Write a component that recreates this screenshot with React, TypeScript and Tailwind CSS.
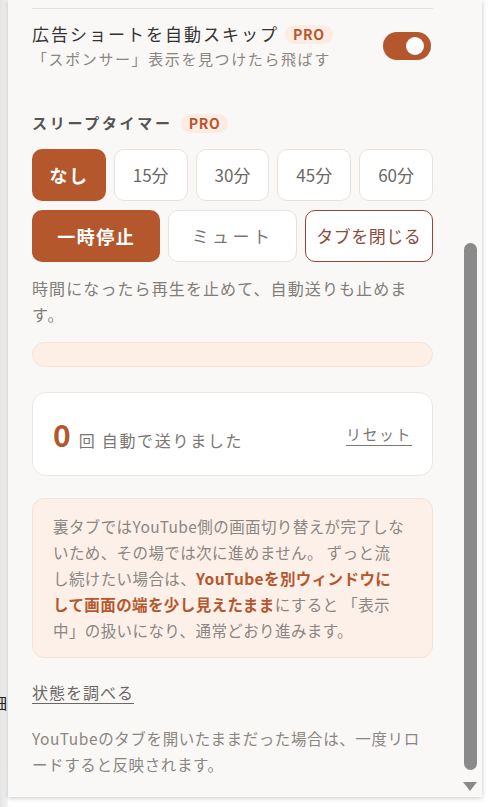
import React from 'react';

const timers = ['なし', '15分', '30分', '45分', '60分'];

function ProBadge() {
  return (
    <span className="rounded-full bg-[#fdece3] px-[8px] text-[14px] font-bold leading-[19px] tracking-[0.05em] text-[#b5572d]">
      PRO
    </span>
  );
}

export default function App() {
  return (
    <div className="flex h-[807px] w-[488px] overflow-hidden bg-white font-['Noto_Sans_CJK_JP',sans-serif]">
      {/* page behind the popup */}
      <div className="flex w-[8px] shrink-0 flex-col overflow-hidden bg-gradient-to-r from-[#e4e4e4] to-[#f4f4f4]">
        <span className="mt-[692px] -ml-[9px] text-[16px] leading-[20px] text-[#222]">細</span>
      </div>

      <div className="flex h-[797px] w-[474px] shrink-0 bg-[#faf8f6] shadow-[0_1px_5px_rgba(0,0,0,0.22)]">
        <div className="flex w-[425px] shrink-0 flex-col pl-[24px] pt-[8px]">
          <div className="h-px bg-[#e6e1dd]" />

          {/* ad skip */}
          <div className="mt-[13px] flex items-center justify-between">
            <div>
              <div className="flex items-center gap-[6px]">
                <span className="text-[17px] leading-[24px] tracking-[2px] text-[#333]">広告ショートを自動スキップ</span>
                <ProBadge />
              </div>
              <p className="mt-[2px] text-[15px] leading-[22px] tracking-[1.6px] text-[#8a8682]">「スポンサー」表示を見つけたら飛ばす</p>
            </div>
            <div className="mr-[2px] flex h-[28px] w-[48px] items-center justify-end rounded-full bg-[#b5572d] pr-[7px]">
              <div className="h-[18px] w-[18px] rounded-full bg-white" />
            </div>
          </div>

          {/* sleep timer */}
          <div className="mt-[42px] flex items-center gap-[8px]">
            <span className="text-[15px] font-bold leading-[22px] tracking-[2.7px] text-[#555]">スリープタイマー</span>
            <ProBadge />
          </div>

          <div className="mt-[15px] grid h-[52px] grid-cols-5 gap-[8px]">
            {timers.map((t, i) =>
              i === 0 ? (
                <button key={t} className="rounded-[10px] bg-[#b5572d] text-[18px] font-bold tracking-[1.5px] text-white">
                  {t}
                </button>
              ) : (
                <button key={t} className="rounded-[10px] border border-[#e8e2de] bg-white text-[17px] text-[#6b6865]">
                  {t}
                </button>
              )
            )}
          </div>

          <div className="mt-[9px] grid h-[52px] grid-cols-3 gap-[8px]">
            <button className="rounded-[10px] bg-[#b5572d] text-[18px] font-bold tracking-[1.5px] text-white">一時停止</button>
            <button className="rounded-[10px] border border-[#e8e2de] bg-white text-[17px] tracking-[0.2em] text-[#7a7672]">ミュート</button>
            <button className="rounded-[10px] border border-[#94443a] bg-white text-[17px] tracking-[0.5px] text-[#8d4a3e]">タブを閉じる</button>
          </div>

          <p className="mt-[13px] text-[16px] leading-[26px] tracking-[1.1px] text-[#817d79]">
            時間になったら再生を止めて、自動送りも止めます。
          </p>

          <div className="mt-[15px] h-[25px] rounded-full border border-[#f6e3d9] bg-[#fdeee6]" />

          {/* counter */}
          <div className="mt-[25px] flex h-[84px] items-center justify-between rounded-[14px] border border-[#ece6e2] bg-white px-[20px]">
            <div className="flex items-baseline gap-[8px]">
              <span className="text-[30px] font-bold leading-[36px] text-[#b5572d]">0</span>
              <span className="text-[16px] leading-[24px] tracking-[1.7px] text-[#7a7672]">回 自動で送りました</span>
            </div>
            <span className="text-[15px] leading-[22px] tracking-[1.5px] text-[#7a7672] underline underline-offset-[5px]">リセット</span>
          </div>

          {/* info */}
          <div className="mt-[22px] rounded-[12px] border border-[#f3e2d8] bg-[#fdf0e9] py-[14px] pl-[20px] pr-[10px] text-[15.5px] leading-[26px] tracking-[0.4px] text-[#8a8682]">
            裏タブではYouTube側の画面切り替えが完了しな
            <br />
            いため、その場では次に進めません。 ずっと流
            <br />
            し続けたい場合は、<span className="font-bold text-[#b5572d]">YouTubeを別ウィンドウに</span>
            <br />
            <span className="font-bold text-[#b5572d]">して画面の端を少し見えたまま</span>にすると 「表示
            <br />
            中」の扱いになり、通常どおり進みます。
          </div>

          <a className="mt-[21px] self-start text-[16px] leading-[26px] tracking-[1px] text-[#6b6865] underline underline-offset-[4px]">
            状態を調べる
          </a>

          <p className="mt-[20px] text-[15.5px] leading-[26px] tracking-[0.6px] text-[#8a8682]">
            YouTubeのタブを開いたままだった場合は、一度リロ
            <br />
            ードすると反映されます。
          </p>
        </div>

        {/* scrollbar */}
        <div className="ml-[30px] flex w-[14px] flex-col items-center">
          <div className="mt-[243px] h-[527px] w-[13px] rounded-full bg-[#8a8a8a]" />
          <div className="mt-[12px] h-0 w-0 border-x-[7px] border-t-[9px] border-x-transparent border-t-[#8a8a8a]" />
        </div>
      </div>
    </div>
  );
}
